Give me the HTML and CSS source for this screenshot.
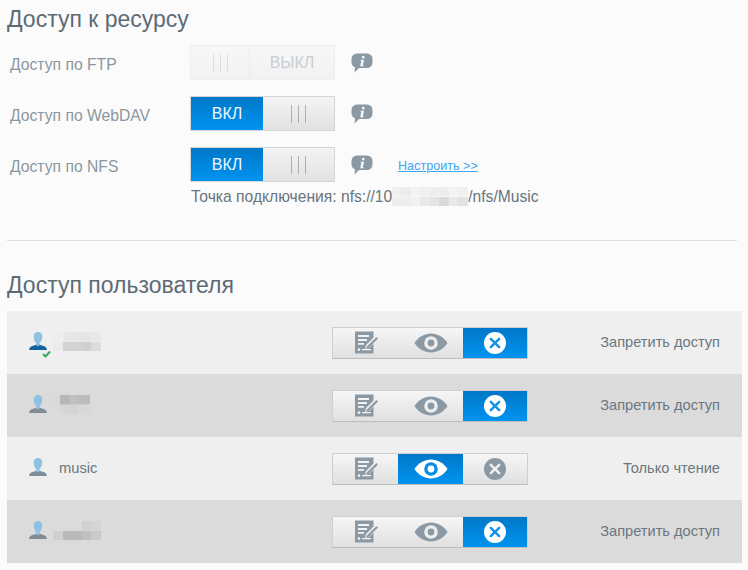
FILE: index.html
```html
<!DOCTYPE html>
<html lang="ru">
<head>
<meta charset="utf-8">
<title>Доступ</title>
<link rel="stylesheet" href="styles.css">
</head>
<body>
<svg class="defs" width="0" height="0" aria-hidden="true">
  <defs>
    <symbol id="info" viewBox="0 0 22 20">
      <path d="M6 0.5h10a5.5 5.5 0 0 1 5.500 5.500v3.500a5.500 5.500 0 0 1-5.500 5.500h-8l-4.500 4.500 0.500-5.200a5.500 5.500 0 0 1-3.500-4.800v-3.500a5.500 5.500 0 0 1 5.500-5.500z" fill="#8a99a4"/>
      <path d="M12.300 2.800a1.400 1.400 0 1 1-0.100 2.800 1.400 1.400 0 0 1 0.100-2.800zM9.300 6.800h3.900l-1.400 5.300c-0.100 0.500 0.300 0.500 1.200 0.200l-0.200 0.800c-1.700 0.700-3.700 0.700-3.500-0.800l1-4.400c0.100-0.500-0.300-0.500-0.800-0.500z" fill="#f4f6f7"/>
    </symbol>
    <symbol id="edit" viewBox="0 0 25 23">
      <path d="M1 0.500h18.500v6l-7.500 7.500-1 4 4-1 4.500-4.500v10h-18.500z" fill="#8a99a4"/>
      <path d="M4 4h11v2h-11zM4 8h9v2h-9zM4 12h6v1.800h-6zM8 18h9v1.300h-9z" fill="#f1f3f4"/>
      <circle cx="5" cy="18.600" r="1.300" fill="#f1f3f4"/>
      <path d="M13 15.500l9.500-9.500 1.500 1.500-9.500 9.500-2.300 0.800z" fill="#8a99a4"/>
    </symbol>
    <symbol id="eye" viewBox="0 0 34 20">
      <path d="M0.500 10c4-6 10-9.500 16.500-9.500s12.500 3.500 16.500 9.500c-4 6-10 9.500-16.500 9.500s-12.500-3.500-16.500-9.500z" fill="currentColor"/>
      <circle cx="17" cy="10" r="6.800" fill="var(--eye-ring)"/>
      <circle cx="17" cy="10" r="3.400" fill="currentColor"/>
    </symbol>
    <symbol id="close" viewBox="0 0 22 22">
      <circle cx="11" cy="11" r="11" fill="currentColor"/>
      <path d="M6.800 6.800l8.400 8.400M15.200 6.800l-8.400 8.400" stroke="var(--x-col)" stroke-width="2.400" stroke-linecap="round" fill="none"/>
    </symbol>
    <symbol id="user" viewBox="0 0 18 18">
      <path d="M0 18c0.300-2.800 2-3.800 4.500-4.300 1.500-0.400 2.600-1 3.500-1.500h2c0.900 0.500 2 1.100 3.500 1.500 2.500 0.500 4.200 1.500 4.500 4.300z" fill="var(--u-body)"/>
      <path d="M9 0c2.800 0 4.300 2 4.300 4.800 0 3-1.700 5.300-2.900 6.800-0.400 1.200-0.300 1.800 0.300 2.400h-2.800h-0.800c0.600-0.600 0.700-1.200 0.300-2.400-1.200-1.500-2.700-3.800-2.700-6.800 0-2.800 1.500-4.800 4.300-4.800z" fill="#8fc1e3"/>
    </symbol>
  </defs>
</svg>

<h2 class="title">Доступ к ресурсу</h2>
<div class="setting">
  <span class="label">Доступ по FTP</span>
  <div class="toggle off disabled"><span class="handle handle-s"><i></i><i></i><i></i></span><span class="state">ВЫКЛ</span></div>
  <svg class="info"><use href="#info"/></svg>
</div>
<div class="setting">
  <span class="label">Доступ по WebDAV</span>
  <div class="toggle"><span class="state">ВКЛ</span><span class="handle"><i></i><i></i><i></i></span></div>
  <svg class="info"><use href="#info"/></svg>
</div>
<div class="setting last">
  <span class="label">Доступ по NFS</span>
  <div class="toggle"><span class="state">ВКЛ</span><span class="handle"><i></i><i></i><i></i></span></div>
  <svg class="info"><use href="#info"/></svg>
  <a class="cfg" href="#">Настроить &gt;&gt;</a>
</div>
<p class="mount">Точка подключения: nfs://10<span class="mask-ip"></span>/nfs/Music</p>

<hr class="divider">

<h2 class="title second">Доступ пользователя</h2>
<div class="users">
  <div class="user-row">
    <span class="avatar active"><svg class="user"><use href="#user"/></svg><svg class="check" viewBox="0 0 9 8"><path d="M1 4l2.500 2.500L8 1.500" fill="none" stroke="#3aa860" stroke-width="2"/></svg></span>
    <span class="name"><span class="mask mask-a"></span></span>
    <div class="seg"><span class="seg-btn"><svg class="ic-edit"><use href="#edit"/></svg></span><span class="seg-btn"><svg class="ic-eye"><use href="#eye"/></svg></span><span class="seg-btn on"><svg class="ic-x"><use href="#close"/></svg></span></div>
    <span class="status">Запретить доступ</span>
  </div>
  <div class="user-row dark">
    <span class="avatar"><svg class="user"><use href="#user"/></svg></span>
    <span class="name"><span class="mask mask-b"></span></span>
    <div class="seg"><span class="seg-btn"><svg class="ic-edit"><use href="#edit"/></svg></span><span class="seg-btn"><svg class="ic-eye"><use href="#eye"/></svg></span><span class="seg-btn on"><svg class="ic-x"><use href="#close"/></svg></span></div>
    <span class="status">Запретить доступ</span>
  </div>
  <div class="user-row">
    <span class="avatar"><svg class="user"><use href="#user"/></svg></span>
    <span class="name">music</span>
    <div class="seg"><span class="seg-btn"><svg class="ic-edit"><use href="#edit"/></svg></span><span class="seg-btn on"><svg class="ic-eye"><use href="#eye"/></svg></span><span class="seg-btn"><svg class="ic-x"><use href="#close"/></svg></span></div>
    <span class="status">Только чтение</span>
  </div>
  <div class="user-row dark">
    <span class="avatar"><svg class="user"><use href="#user"/></svg></span>
    <span class="name"><span class="mask mask-c"></span></span>
    <div class="seg"><span class="seg-btn"><svg class="ic-edit"><use href="#edit"/></svg></span><span class="seg-btn"><svg class="ic-eye"><use href="#eye"/></svg></span><span class="seg-btn on"><svg class="ic-x"><use href="#close"/></svg></span></div>
    <span class="status">Запретить доступ</span>
  </div>
</div>
</body>
</html>
```
FILE: styles.css
```css
* { box-sizing: border-box; }
html, body { margin: 0; padding: 0; }
body {
  width: 748px;
  height: 570px;
  overflow: hidden;
  background: #fbfbfb;
  font-family: "Liberation Sans", Arial, sans-serif;
  color: #6f7b84;
}
.defs { position: absolute; }
.title {
  margin: 0;
  padding: 5px 0 0 7px;
  height: 38px;
  font-size: 23px;
  line-height: 28px;
  font-weight: 400;
  color: #5d6b76;
}
.second { height: 40px; padding-top: 0; margin-top: 30px; }
.setting {
  display: flex;
  align-items: center;
  height: 35px;
  margin: 0 0 16px 0;
  padding-left: 10px;
  position: relative;
}
.title + .setting { margin-top: 7px; }
.setting.last { margin-bottom: 0; }
.label {
  width: 180px;
  font-size: 15.700px;
  color: #8b969e;
  position: relative;
  top: 2px;
}
.toggle {
  display: flex;
  width: 145px;
  height: 35px;
  border: 1px solid #d3d6d8;
  background: linear-gradient(#f3f3f3, #e2e2e2);
}
.state {
  width: 72px;
  display: flex;
  align-items: center;
  justify-content: center;
  font-size: 16px;
  color: #eef7fd;
  background: linear-gradient(#0078c8, #0093f0);
}
.handle {
  flex: 1;
  display: flex;
  align-items: center;
  justify-content: center;
  gap: 6px;
}
.handle i { width: 1px; height: 18px; background: #a9b0b5; }
.disabled { background: linear-gradient(#f7f7f7, #f2f2f2); border-color: #efefef; }
.disabled .state { background: none; color: #c9ced2; flex: 1; border-left: 1px solid #ececec; }
.disabled .handle { flex: none; width: 58px; }
.disabled .handle i { background: #dcdfe1; }
.info { width: 22px; height: 20px; margin-left: 16px; margin-top: 0; }
.cfg {
  margin-left: 25px;
  font-size: 12.600px;
  color: #3ea6f2;
  text-decoration: underline;
  position: relative;
  top: 1px;
}
.mount {
  margin: 5px 0 0 191px;
  font-size: 15.650px;
  line-height: 18px;
  color: #69747d;
  white-space: nowrap;
}
.mask-ip {
  display: inline-block;
  width: 76px;
  height: 19px;
  vertical-align: -4px;
  background:
    linear-gradient(90deg, #f0f0f0 0 12%, #ececec 12% 25%, #f3f3f3 25% 37%, #f0f0f0 37% 50%, #ededed 50% 62%, #eeeeee 62% 75%, #f3f3f3 75% 87%, #f0f0f0 87%) top / 100% 50% no-repeat,
    linear-gradient(90deg, #eeeeee 0 25%, #f1f1f1 25% 37%, #e9e9e9 37% 50%, #e4e4e4 50% 62%, #dadada 62% 75%, #e9e9e9 75% 87%, #e2e2e2 87%) bottom / 100% 50% no-repeat;
}
.divider {
  margin: 34px 11px 0 7px;
  border: 0;
  border-top: 1px solid #dfdfdf;
}
.users { margin: 0 6px 0 7px; }
.user-row {
  display: flex;
  align-items: center;
  height: 63px;
  background: #efefef;
  position: relative;
}
.dark { background: #dbdbdb; }
.avatar {
  position: relative;
  width: 18px;
  height: 18px;
  margin-left: 22px;
  margin-top: -4px;
  --u-body: #7f8d98;
}
.avatar.active { --u-body: #14639f; }
.user { display: block; width: 18px; height: 18px; }
.check { position: absolute; left: 13px; top: 18px; width: 9px; height: 8px; }
.name {
  width: 273px;
  margin-left: 12px;
  font-size: 14.700px;
  color: #6b7780;
  margin-top: -1px;
}
.mask { display: block; height: 19px; margin-top: -1px; }
.mask-a {
  width: 48px;
  margin-left: -6px;
  background:
    linear-gradient(90deg, #eeeeee 0 20%, #e7e7e7 20% 40%, #e5e5e5 40% 80%, #e8e8e8 80%) top / 100% 50% no-repeat,
    linear-gradient(90deg, #ebebeb 0 20%, #d2d2d2 20% 60%, #cfcfcf 60% 80%, #dcdcdc 80%) bottom / 100% 50% no-repeat;
}
.mask-b {
  width: 39px;
  margin-left: -8px;
  background:
    linear-gradient(90deg, #d9d9d9 0 23%, #b6b6b6 23% 46%, #c0c0c0 46% 69%, #bcbcbc 69%) top / 100% 50% no-repeat,
    linear-gradient(90deg, #dbdbdb 0 23%, #d6d6d6 23% 46%, #d4d4d4 46% 69%, #d8d8d8 69%) bottom / 100% 50% no-repeat;
}
.mask-c {
  width: 48px;
  margin-left: -6px;
  background:
    linear-gradient(90deg, #dbdbdb 0 60%, #d1d1d1 60% 80%, #d5d5d5 80%) top / 100% 50% no-repeat,
    linear-gradient(90deg, #cfcfcf 0 20%, #b9b9b9 20% 60%, #c0c0c0 60% 80%, #cacaca 80%) bottom / 100% 50% no-repeat;
}
.seg {
  display: flex;
  width: 196px;
  height: 32px;
  border: 1px solid #cfcfcf;
  border-bottom-color: #bdbdbd;
  background: linear-gradient(#f6f6f6, #e0e0e0);
}
.seg-btn {
  flex: 0 0 65px;
  display: flex;
  align-items: center;
  justify-content: center;
  color: #8a99a4;
  --eye-ring: #eeeeee;
  --x-col: #f1f1f1;
}
.seg-btn:last-child { flex: 1; }
.seg-btn.on {
  color: #fff;
  background: linear-gradient(#0078c8, #0093f0);
  --eye-ring: #0a8de6;
  --x-col: #1391e8;
}
.ic-edit { width: 25px; height: 23px; margin-left: 1px; }
.ic-eye { width: 34px; height: 20px; }
.ic-x { width: 22px; height: 22px; }
.status {
  flex: 1;
  text-align: right;
  padding-right: 22px;
  font-size: 14.600px;
  color: #6b7780;
  margin-top: -1px;
}
```
